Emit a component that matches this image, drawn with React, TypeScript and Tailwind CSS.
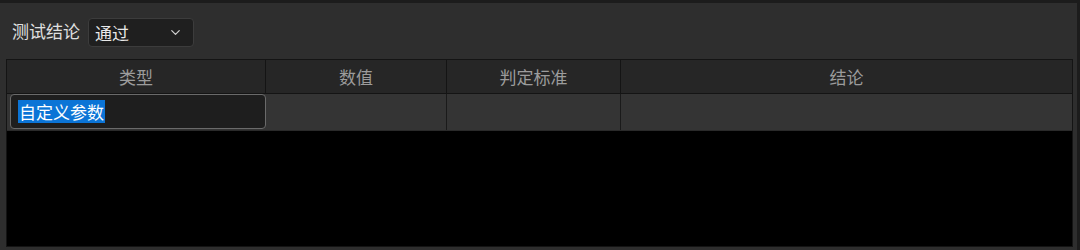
import { ChevronDown } from 'lucide-react';

const columns = [
    { label: '类型', width: 'w-[259px]' },
    { label: '数值', width: 'w-[181px]' },
    { label: '判定标准', width: 'w-[174px]' },
    { label: '结论', width: 'flex-1' },
];

export default function App() {
    return (
        <div
            className="w-[1080px] h-[250px] bg-[#2e2e2e] border-t-[3px] border-t-[#1c1c1c] border-r-[3px] border-r-[#1c1c1c] flex flex-col text-[17px] text-[#d6d6d6]"
            style={{ fontFamily: '"Noto Sans CJK SC", "Noto Sans", sans-serif' }}
        >
            {/* verdict selector */}
            <div className="flex items-center h-[56px] pl-[12px] gap-[8px]">
                <span className="text-[#e0e0e0]">测试结论</span>
                <div className="w-[106px] h-[29px] mt-[3px] bg-[#1f1f1f] border border-[#3c3c3c] rounded-[4px] flex items-center justify-between pl-[6px] pr-[10px]">
                    <span className="text-[#e8e8e8]">通过</span>
                    <ChevronDown size={15} strokeWidth={2} className="text-[#cfcfcf]" />
                </div>
            </div>

            {/* table */}
            <div className="ml-[6px] mr-[4px] h-[188px] border border-[#141414] bg-black flex flex-col">
                <div className="flex h-[34px] bg-[#262626] border-b border-[#141414]">
                    {columns.map((c, i) => (
                        <div
                            key={c.label}
                            className={`${c.width} flex items-center justify-center text-[#9c9c9c] ${i < columns.length - 1 ? 'border-r border-[#141414]' : ''}`}
                        >
                            {c.label}
                        </div>
                    ))}
                </div>
                <div className="flex h-[37px] bg-[#343434] border-b border-[#2a2a2a]">
                    <div className="w-[259px] pl-[3px] pb-[1px]">
                        <div className="h-full bg-[#1e1e1e] border border-[#6a6a6a] rounded-[4px] flex items-center pl-[7px]">
                            <span className="bg-[#0b74d6] text-white px-[1px] leading-[23px]">自定义参数</span>
                        </div>
                    </div>
                    <div className="w-[181px] border-r border-[#1a1a1a]" />
                    <div className="w-[174px] border-r border-[#1a1a1a]" />
                    <div className="flex-1" />
                </div>
                <div className="flex-1" />
            </div>
        </div>
    );
}
